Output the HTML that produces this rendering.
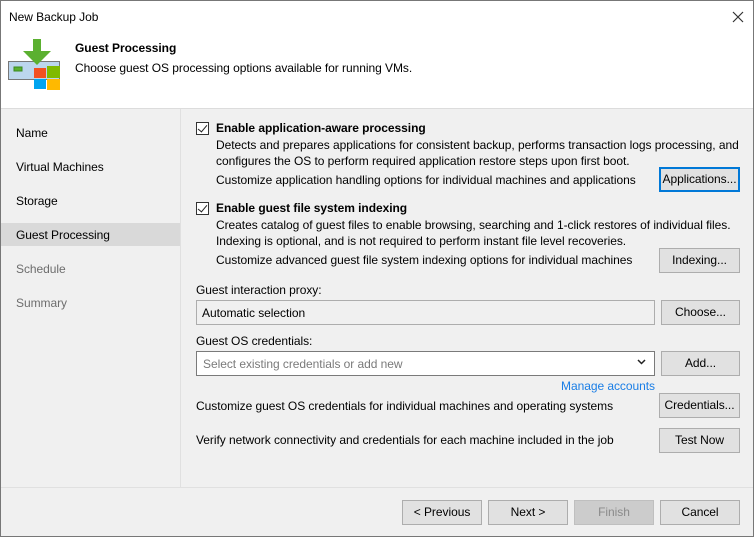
<!DOCTYPE html>
<html><head><style>
*{box-sizing:border-box;margin:0;padding:0}
body{width:754px;height:537px;overflow:hidden;font-family:"Liberation Sans",sans-serif;font-size:12px;color:#000;letter-spacing:-0.05px}
#w{position:absolute;left:0;top:0;width:754px;height:537px;border:1px solid #777;background:#f0f0f0}
.a{position:absolute;white-space:nowrap;line-height:14px}
.btn{position:absolute;border:1px solid #adadad;background:#e1e1e1;text-align:center;line-height:23px;height:25px}
.cb{position:absolute;width:13px;height:13px;border:1px solid #333;background:#fff}
.cb:after{content:"";position:absolute;left:3px;top:0px;width:4px;height:8px;border:solid #222;border-width:0 1.5px 1.5px 0;transform:rotate(40deg)}
.g{color:#6d6d6d}
</style></head><body><div id="w">
<div style="position:absolute;left:0;top:0;width:752px;height:108px;background:#fff;border-bottom:1px solid #dcdcdc"></div>
<div class="a" style="left:8px;top:9px">New Backup Job</div>
<svg class="a" style="left:731px;top:10px" width="12" height="12"><path d="M1 1L11 11M11 1L1 11" stroke="#333" stroke-width="1.2"/></svg>
<svg style="position:absolute;left:6px;top:36px" width="54" height="54">
<rect x="1.5" y="24.5" width="51" height="18" fill="#bcd6ee" stroke="#777"/>
<rect x="7" y="30" width="8" height="4" fill="#5bb030" stroke="#3a8a20"/>
<rect x="26" y="2" width="8" height="15" fill="#5bb030"/>
<path d="M16 14L44 14L30 28Z" fill="#5bb030"/>
<rect x="27" y="31" width="12" height="10" fill="#f25022"/>
<rect x="40" y="29" width="13" height="12" fill="#7fba00"/>
<rect x="27" y="42" width="12" height="10" fill="#00a4ef"/>
<rect x="40" y="42" width="13" height="11" fill="#ffb900"/>
</svg>
<div class="a" style="left:74px;top:40px;font-weight:bold">Guest Processing</div>
<div class="a" style="left:74px;top:60px">Choose guest OS processing options available for running VMs.</div>
<div style="position:absolute;left:179px;top:108px;width:1px;height:378px;background:#fff;border-left:1px solid #e0e0e0"></div>
<div class="a" style="left:15px;top:125px">Name</div>
<div class="a" style="left:15px;top:159px">Virtual Machines</div>
<div class="a" style="left:15px;top:193px">Storage</div>
<div style="position:absolute;left:0;top:222px;width:179px;height:23px;background:#d9d9d9"></div>
<div class="a" style="left:15px;top:227px">Guest Processing</div>
<div class="a g" style="left:15px;top:261px">Schedule</div>
<div class="a g" style="left:15px;top:295px">Summary</div>

<div class="cb" style="left:195px;top:121px"></div>
<div class="a" style="left:215px;top:120px;font-weight:bold">Enable application-aware processing</div>
<div class="a" style="left:215px;top:137px">Detects and prepares applications for consistent backup, performs transaction logs processing, and</div>
<div class="a" style="left:215px;top:153px">configures the OS to perform required application restore steps upon first boot.</div>
<div class="a" style="left:215px;top:172px">Customize application handling options for individual machines and applications</div>
<div class="btn" style="left:658px;top:166px;width:81px;border:1px solid #0078d7;box-shadow:inset 0 0 0 1px #0078d7">Applications...</div>

<div class="cb" style="left:195px;top:201px"></div>
<div class="a" style="left:215px;top:200px;font-weight:bold">Enable guest file system indexing</div>
<div class="a" style="left:215px;top:217px">Creates catalog of guest files to enable browsing, searching and 1-click restores of individual files.</div>
<div class="a" style="left:215px;top:233px">Indexing is optional, and is not required to perform instant file level recoveries.</div>
<div class="a" style="left:215px;top:252px">Customize advanced guest file system indexing options for individual machines</div>
<div class="btn" style="left:658px;top:247px;width:81px">Indexing...</div>

<div class="a" style="left:195px;top:282px">Guest interaction proxy:</div>
<div style="position:absolute;left:195px;top:299px;width:459px;height:25px;border:1px solid #adadad;background:#f0f0f0"></div>
<div class="a" style="left:201px;top:305px">Automatic selection</div>
<div class="btn" style="left:660px;top:299px;width:79px">Choose...</div>

<div class="a" style="left:195px;top:333px">Guest OS credentials:</div>
<div style="position:absolute;left:195px;top:350px;width:459px;height:25px;border:1px solid #7a7a7a;background:#fff"></div>
<div class="a" style="left:202px;top:356px;color:#7a7a7a">Select existing credentials or add new</div>
<svg class="a" style="left:636px;top:358px" width="9" height="6"><path d="M1 1L4.5 4.5L8 1" stroke="#222" stroke-width="1.5" fill="none"/></svg>
<div class="btn" style="left:660px;top:350px;width:79px">Add...</div>
<div class="a" style="left:560px;top:378px;color:#1a7ee6">Manage accounts</div>

<div class="a" style="left:195px;top:398px">Customize guest OS credentials for individual machines and operating systems</div>
<div class="btn" style="left:658px;top:392px;width:81px">Credentials...</div>
<div class="a" style="left:195px;top:432px">Verify network connectivity and credentials for each machine included in the job</div>
<div class="btn" style="left:658px;top:427px;width:81px">Test Now</div>

<div style="position:absolute;left:0;top:486px;width:752px;height:1px;background:#fff;border-top:1px solid #e0e0e0"></div>
<div class="btn" style="left:401px;top:499px;width:80px">&lt; Previous</div>
<div class="btn" style="left:487px;top:499px;width:80px">Next &gt;</div>
<div class="btn" style="left:573px;top:499px;width:80px;background:#cccccc;border-color:#bfbfbf;color:#8a8a8a">Finish</div>
<div class="btn" style="left:659px;top:499px;width:80px">Cancel</div>
</div></body></html>
